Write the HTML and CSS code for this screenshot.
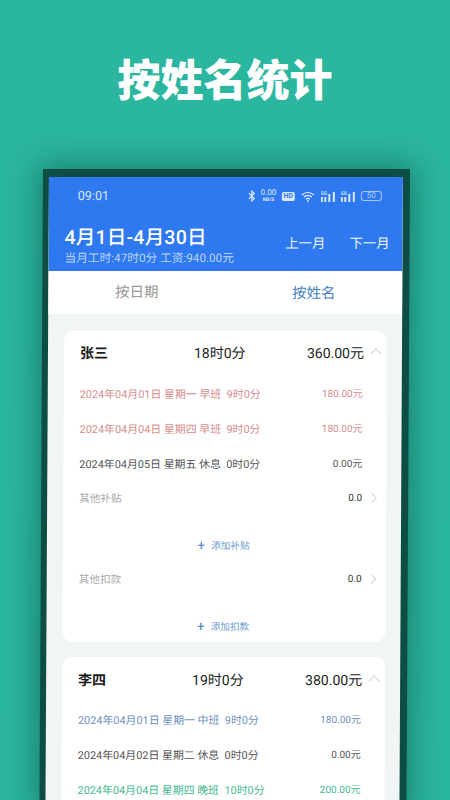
FILE: index.html
```html
<!DOCTYPE html>
<html lang="zh">
<head>
<meta charset="utf-8">
<title>按姓名统计</title>
<link rel="stylesheet" href="styles.css">
</head>
<body>
<h1 class="title">按姓名统计</h1>
<div class="phone">
  <div class="screen">
    <header class="head">
      <div class="status">
        <span class="time">09:01</span>
        <div class="status-icons">
          <svg class="i-bt" viewBox="0 0 8 12" width="8" height="12"><path d="M1 3.2 6.5 8.6 4 11V1l2.5 2.4L1 8.8" fill="none" stroke="#e4eeff" stroke-width="1.1"/></svg>
          <span class="speed"><b>0.00</b><i>KB/S</i></span>
          <span class="hd">HD</span>
          <svg class="i-wifi" viewBox="0 0 14 11" width="14" height="11"><path d="M1 4a8.5 8.5 0 0 1 12 0M3 6.2a5.5 5.5 0 0 1 8 0M5 8.3a2.7 2.7 0 0 1 4 0" fill="none" stroke="#e4eeff" stroke-width="1.2"/><circle cx="7" cy="10" r=".9" fill="#e4eeff"/></svg>
          <span class="signal"><i>5G</i><svg viewBox="0 0 15 11" width="15" height="11"><g fill="#dbe8ff"><rect x="0" y="6" width="2" height="5"/><rect x="3.5" y="6" width="2" height="5"/><rect x="7.5" y="3" width="2" height="8"/><rect x="12" y="1" width="2" height="10"/></g></svg></span>
          <span class="signal"><i>5G</i><svg viewBox="0 0 15 11" width="15" height="11"><g fill="#dbe8ff"><rect x="0" y="6" width="2" height="5"/><rect x="3.5" y="6" width="2" height="5"/><rect x="7.5" y="3" width="2" height="8"/><rect x="12" y="1" width="2" height="10"/></g></svg></span>
          <span class="battery">50</span>
        </div>
      </div>
      <div class="range">
        <div class="range-left">
          <div class="range-title">4月1日-4月30日</div>
          <div class="range-sub">当月工时:47时0分 工资:940.00元</div>
        </div>
        <div class="range-nav"><span>上一月</span><span>下一月</span></div>
      </div>
    </header>
    <nav class="tabs">
      <span class="tab">按日期</span>
      <span class="tab tab-on">按姓名</span>
    </nav>
    <main class="list">
      <section class="card">
        <div class="card-head">
          <span class="name">张三</span>
          <span class="hours">18时0分</span>
          <span class="pay">360.00元</span>
          <svg class="chev" viewBox="0 0 12 7" width="12" height="7"><path d="M.7 6.3 6 1l5.3 5.3" fill="none" stroke="#d4d4d4" stroke-width="1"/></svg>
        </div>
        <div class="row red"><span>2024年04月01日 星期一 早班&nbsp; 9时0分</span><span class="amt">180.00元</span></div>
        <div class="row red"><span>2024年04月04日 星期四 早班&nbsp; 9时0分</span><span class="amt">180.00元</span></div>
        <div class="row dark"><span>2024年04月05日 星期五 休息&nbsp; 0时0分</span><span class="amt">0.00元</span></div>
        <div class="extra"><span class="extra-label">其他补贴</span><span class="extra-val">0.0</span>
          <svg viewBox="0 0 7 12" width="7" height="12"><path d="M1 1l5 5-5 5" fill="none" stroke="#cfcfcf" stroke-width="1"/></svg></div>
        <div class="add"><span class="plus">+</span>添加补贴</div>
        <div class="extra extra-2"><span class="extra-label">其他扣款</span><span class="extra-val">0.0</span>
          <svg viewBox="0 0 7 12" width="7" height="12"><path d="M1 1l5 5-5 5" fill="none" stroke="#cfcfcf" stroke-width="1"/></svg></div>
        <div class="add"><span class="plus">+</span>添加扣款</div>
      </section>
      <section class="card card-2">
        <div class="card-head">
          <span class="name">李四</span>
          <span class="hours">19时0分</span>
          <span class="pay">380.00元</span>
          <svg class="chev" viewBox="0 0 12 7" width="12" height="7"><path d="M.7 6.3 6 1l5.3 5.3" fill="none" stroke="#d4d4d4" stroke-width="1"/></svg>
        </div>
        <div class="row blue"><span>2024年04月01日 星期一 中班&nbsp; 9时0分</span><span class="amt">180.00元</span></div>
        <div class="row dark"><span>2024年04月02日 星期二 休息&nbsp; 0时0分</span><span class="amt">0.00元</span></div>
        <div class="row green"><span>2024年04月04日 星期四 晚班&nbsp; 10时0分</span><span class="amt">200.00元</span></div>
      </section>
    </main>
  </div>
</div>
</body>
</html>
```
FILE: styles.css
```css
* { box-sizing: border-box; }
html, body { margin: 0; height: 800px; overflow: hidden; }
body {
  width: 450px;
  background: #2bb69f;
  font-family: Roboto, "Noto Sans CJK SC", sans-serif;
  color: #333;
}
.title {
  margin: 0;
  height: 169px;
  padding-top: 47px;
  text-align: center;
  font-size: 43px;
  line-height: 60px;
  font-weight: 900;
  color: #fff;
  font-family: "Noto Sans CJK SC", sans-serif;
}
.phone {
  margin-left: 43px;
  width: 367px;
  height: 640px;
  padding: 8px 7px 0 6px;
  background: #0e4d43;
  box-shadow: 0 0 30px 4px rgba(10, 70, 60, .5);
  transform: skewX(-.32deg);
  transform-origin: 0 0;
}
.screen { height: 100%; background: #f2f5f6; overflow: hidden; }
.head { height: 94px; background: #2e78f0; color: #fff; }
.status {
  height: 37px;
  padding: 0 21px 0 29px;
  display: flex;
  align-items: center;
  justify-content: space-between;
}
.time { font-size: 12.5px; color: #dbe8ff; }
.status-icons { display: flex; align-items: center; gap: 4px; margin-top: 1px; }
.speed { display: flex; flex-direction: column; align-items: center; color: #e4eeff; line-height: 6px; width: 17px; margin-right: 1px; }
.speed b { font-size: 8px; font-weight: 400; }
.speed i { font-size: 5px; font-style: normal; font-weight: 700; }
.hd {
  width: 13px; height: 9px;
  background: #dbe8ff; color: #2e78f0;
  border-radius: 2px;
  font-size: 7px; line-height: 9px; font-weight: 700; text-align: center;
}
.i-wifi { margin: 0 1px 0 2px; }
.signal { position: relative; display: block; height: 11px; margin-left: 1px; }
.signal svg { display: block; }
.signal i {
  position: absolute; left: 0; top: -1px;
  font-size: 5px; line-height: 6px; font-style: normal; font-weight: 700; color: #dbe8ff;
}
.battery {
  width: 21px; height: 10px; margin-left: 1px;
  border: 1px solid #a9c8fa;
  border-radius: 3px;
  color: #b9d2fb;
  font-size: 8px; line-height: 8px; text-align: center;
}
.range {
  display: flex;
  justify-content: space-between;
  align-items: flex-end;
  padding: 11px 13px 0 16px;
}
.range-title { font-size: 19.5px; line-height: 26px; font-weight: 500; letter-spacing: .2px; }
.range-sub { font-size: 11.7px; line-height: 15px; color: #bcd5fb; }
.range-nav { display: flex; gap: 24px; font-size: 13.4px; line-height: 20px; padding-bottom: 12px; color: #f0f5ff; }
.tabs { height: 43px; background: #fff; display: flex; }
.tab { flex: 1; text-align: center; font-size: 14.5px; line-height: 44px; color: #999; }
.tab-on { color: #4a7fc0; padding-top: 1px; }
.list { padding: 17px 15px 0 16px; }
.card { background: #fff; border-radius: 10px; padding: 0 4px 0 16px; height: 311px; }
.card-2 { margin-top: 15px; height: 200px; padding-top: 1px; }
.card-2 .card-head { height: 43px; padding-bottom: 2px; }
.card-head { display: flex; align-items: center; height: 44px; color: #222; padding-bottom: 3px; }
.name { flex: none; width: 114px; font-size: 14px; font-weight: 700; color: #1b1b1b; }
.hours { flex: none; font-size: 14px; width: 113px; }
.pay { flex: none; font-size: 14px; width: 56px; text-align: right; white-space: nowrap; }
.chev { flex: none; margin-left: 7px; }
.row {
  display: flex;
  justify-content: space-between;
  height: 35px;
  align-items: center;
  font-size: 10.9px;
  padding-right: 20px;
  white-space: nowrap;
}
.row .amt { font-size: 10px; }
.red { color: #d58c8c; }
.dark { color: #555; }
.blue { color: #6f8fc0; }
.green { color: #45b892; }
.extra { display: flex; align-items: center; height: 35px; font-size: 10.6px; padding-right: 5px; }
.extra-label { flex: 1; color: #aaa; }
.extra-val { color: #333; margin-right: 8px; font-size: 10px; }
.add {
  height: 45px;
  padding: 15px 14px 0 0;
  display: flex;
  align-items: center;
  justify-content: center;
  font-size: 9.6px;
  color: #6c9bd0;
}
.plus { font-size: 14px; margin-right: 6px; color: #4d86c6; }
.extra-2 { margin-top: 1px; }
```
